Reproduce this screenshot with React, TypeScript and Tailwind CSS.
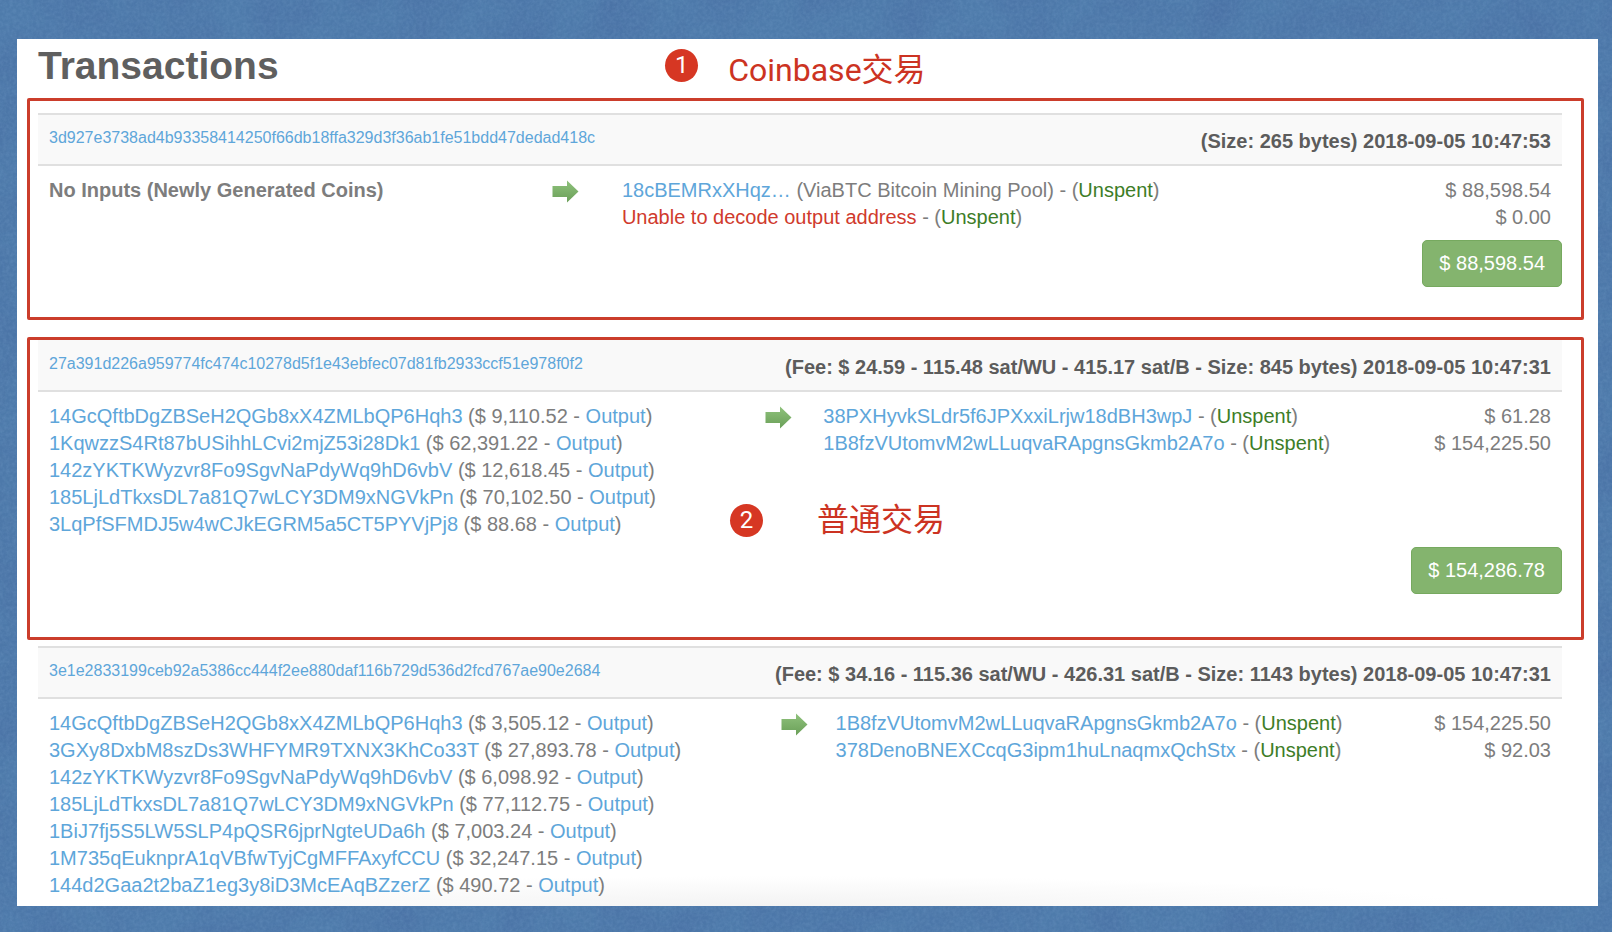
import React from "react";

type Input = { address: string; amount: string };
type Output = { address: string; amount: string; note?: string; broken?: boolean };
type Tx = {
  hash: string;
  meta: string;
  inputs: Input[];
  outputs: Output[];
  total?: string;
};

const coinbaseTx: Tx = {
  hash: "3d927e3738ad4b93358414250f66db18ffa329d3f36ab1fe51bdd47dedad418c",
  meta: "(Size: 265 bytes) 2018-09-05 10:47:53",
  inputs: [],
  outputs: [
    { address: "18cBEMRxXHqz…", note: "(ViaBTC Bitcoin Mining Pool)", amount: "$ 88,598.54" },
    { address: "Unable to decode output address", broken: true, amount: "$ 0.00" },
  ],
  total: "$ 88,598.54",
};

const regularTx: Tx = {
  hash: "27a391d226a959774fc474c10278d5f1e43ebfec07d81fb2933ccf51e978f0f2",
  meta: "(Fee: $ 24.59 - 115.48 sat/WU - 415.17 sat/B - Size: 845 bytes) 2018-09-05 10:47:31",
  inputs: [
    { address: "14GcQftbDgZBSeH2QGb8xX4ZMLbQP6Hqh3", amount: "$ 9,110.52" },
    { address: "1KqwzzS4Rt87bUSihhLCvi2mjZ53i28Dk1", amount: "$ 62,391.22" },
    { address: "142zYKTKWyzvr8Fo9SgvNaPdyWq9hD6vbV", amount: "$ 12,618.45" },
    { address: "185LjLdTkxsDL7a81Q7wLCY3DM9xNGVkPn", amount: "$ 70,102.50" },
    { address: "3LqPfSFMDJ5w4wCJkEGRM5a5CT5PYVjPj8", amount: "$ 88.68" },
  ],
  outputs: [
    { address: "38PXHyvkSLdr5f6JPXxxiLrjw18dBH3wpJ", amount: "$ 61.28" },
    { address: "1B8fzVUtomvM2wLLuqvaRApgnsGkmb2A7o", amount: "$ 154,225.50" },
  ],
  total: "$ 154,286.78",
};

const lastTx: Tx = {
  hash: "3e1e2833199ceb92a5386cc444f2ee880daf116b729d536d2fcd767ae90e2684",
  meta: "(Fee: $ 34.16 - 115.36 sat/WU - 426.31 sat/B - Size: 1143 bytes) 2018-09-05 10:47:31",
  inputs: [
    { address: "14GcQftbDgZBSeH2QGb8xX4ZMLbQP6Hqh3", amount: "$ 3,505.12" },
    { address: "3GXy8DxbM8szDs3WHFYMR9TXNX3KhCo33T", amount: "$ 27,893.78" },
    { address: "142zYKTKWyzvr8Fo9SgvNaPdyWq9hD6vbV", amount: "$ 6,098.92" },
    { address: "185LjLdTkxsDL7a81Q7wLCY3DM9xNGVkPn", amount: "$ 77,112.75" },
    { address: "1BiJ7fj5S5LW5SLP4pQSR6jprNgteUDa6h", amount: "$ 7,003.24" },
    { address: "1M735qEuknprA1qVBfwTyjCgMFFAxyfCCU", amount: "$ 32,247.15" },
    { address: "144d2Gaa2t2baZ1eg3y8iD3McEAqBZzerZ", amount: "$ 490.72" },
  ],
  outputs: [
    { address: "1B8fzVUtomvM2wLLuqvaRApgnsGkmb2A7o", amount: "$ 154,225.50" },
    { address: "378DenoBNEXCcqG3ipm1huLnaqmxQchStx", amount: "$ 92.03" },
  ],
};

function Link({ children }: { children: React.ReactNode }) {
  return (
    <a href="#" className="text-[#5ea6da] hover:underline">
      {children}
    </a>
  );
}

function Arrow() {
  return (
    <svg width="27" height="23" viewBox="0 0 27 23" aria-hidden="true" className="mt-[3px] block">
      <defs>
        <linearGradient id="arrowFill" x1="0" y1="0" x2="0" y2="1">
          <stop offset="0" stopColor="#8fc27c" />
          <stop offset="1" stopColor="#6a9f58" />
        </linearGradient>
      </defs>
      <path d="M0.5 6H15V0.5L26.5 11.5L15 22.5V17H0.5Z" fill="url(#arrowFill)" />
    </svg>
  );
}

type TransactionProps = { tx: Tx; inputsCol: string; arrowCol: string; flushTop?: boolean };

function Transaction({ tx, inputsCol, arrowCol, flushTop }: TransactionProps) {
  return (
    <div>
      <table className="w-full table-fixed border-collapse text-left">
        <colgroup>
          <col className={inputsCol} />
          <col className={arrowCol} />
          <col />
          <col className="w-[170px]" />
        </colgroup>
        <thead>
          <tr>
            <th colSpan={4} className="p-0 font-normal">
              <div
                className={
                  (flushTop ? "border-b-2 pt-[14px]" : "border-y-2 pt-[13px]") +
                  " flex items-start justify-between border-[#e0e0e0] bg-[#f9f9f9] px-[11px] pb-[9px]"
                }
              >
                <span className="text-base leading-5">
                  <Link>{tx.hash}</Link>
                </span>
                <span className="font-bold text-[#5c5c5c]">{tx.meta}</span>
              </div>
            </th>
          </tr>
        </thead>
        <tbody>
          <tr className="align-top whitespace-nowrap">
            <td className="px-[11px] pt-[11px]">
              {tx.inputs.length === 0 ? (
                <b>No Inputs (Newly Generated Coins)</b>
              ) : (
                tx.inputs.map((input) => (
                  <div key={input.address}>
                    <Link>{input.address}</Link> ({input.amount} - <Link>Output</Link>)
                  </div>
                ))
              )}
            </td>
            <td className="pt-[11px] pl-[11px]">
              <Arrow />
            </td>
            <td className="px-[11px] pt-[11px]">
              {tx.outputs.map((output) => (
                <div key={output.address}>
                  {output.broken ? (
                    <span className="text-[#d03a2d]">{output.address}</span>
                  ) : (
                    <Link>{output.address}</Link>
                  )}
                  {output.note ? <span> {output.note}</span> : null} - (
                  <span className="text-[#3d7d27]">Unspent</span>)
                </div>
              ))}
            </td>
            <td className="px-[11px] pt-[11px] text-right">
              {tx.outputs.map((output) => (
                <div key={output.address}>{output.amount}</div>
              ))}
            </td>
          </tr>
        </tbody>
      </table>
      {tx.total ? (
        <div className="mt-[9px] flex justify-end">
          <button
            type="button"
            className="rounded-[5px] border border-[#76a95f] bg-[#84b46e] px-4 py-[9px] text-white"
          >
            {tx.total}
          </button>
        </div>
      ) : null}
    </div>
  );
}

function Badge({ children }: { children: React.ReactNode }) {
  return (
    <span className="flex size-[33px] items-center justify-center rounded-full bg-[#d63723] font-[Roboto,sans-serif] text-[24px] text-white">
      {children}
    </span>
  );
}

function Label({ children }: { children: React.ReactNode }) {
  return (
    <span className="font-[Roboto,'Noto_Sans_CJK_SC',sans-serif] text-[32px] leading-[42px] text-[#cc3322]">
      {children}
    </span>
  );
}

function PaperTexture() {
  return (
    <svg aria-hidden="true" className="pointer-events-none absolute inset-0 h-full w-full">
      <filter id="mottle" x="0" y="0" width="100%" height="100%" colorInterpolationFilters="sRGB">
        <feTurbulence type="fractalNoise" baseFrequency="0.02" numOctaves="3" seed="9" />
        <feColorMatrix values="0 0 0 0 0.27  0 0 0 0 0.4  0 0 0 0 0.62  0.7 0 0 0 -0.2" />
      </filter>
      <filter id="grain" x="0" y="0" width="100%" height="100%" colorInterpolationFilters="sRGB">
        <feTurbulence type="fractalNoise" baseFrequency="0.3" numOctaves="3" seed="4" />
        <feColorMatrix values="0 0 0 0 0.6  0 0 0 0 0.75  0 0 0 0 0.9  0.25 0 0 0 -0.08" />
      </filter>
      <rect width="100%" height="100%" filter="url(#mottle)" />
      <rect width="100%" height="100%" filter="url(#grain)" />
    </svg>
  );
}

export default function App() {
  return (
    <div className="relative min-h-screen bg-[#4e7bab] pt-[39px] pr-[14px] pb-[26px] pl-[17px] font-['Liberation_Sans',Arial,sans-serif] text-[20px] leading-[27px] text-[#7d7d7d]">
      <PaperTexture />
      <main className="relative bg-white bg-[radial-gradient(ellipse_700px_30px_at_48%_100%,#f3f3f3,#ffffff)] pb-[7px]">
        <div className="flex h-[59px] items-start">
          <h1 className="w-[41%] pt-1 pl-[21px] text-[39px] leading-[46px] font-bold text-[#5f5f5f]">Transactions</h1>
          <div className="flex gap-[30px] pt-[10px]">
            <Badge>1</Badge>
            <Label>Coinbase交易</Label>
          </div>
        </div>

        <section className="mr-[14px] ml-[10px] rounded-[2px] border-[3px] border-[#cb3d2b] pt-3 pr-[19px] pb-[30px] pl-2">
          <Transaction tx={coinbaseTx} inputsCol="w-[33%]" arrowCol="w-[70px]" />
        </section>

        <section className="relative mt-[17px] mr-[14px] ml-[10px] rounded-[2px] border-[3px] border-[#cb3d2b] pr-[19px] pb-[43px] pl-2">
          <Transaction tx={regularTx} inputsCol="w-[47%]" arrowCol="w-[58px]" flushTop />
          <div className="absolute top-[159px] left-[700px] flex items-center gap-[54px]">
            <Badge>2</Badge>
            <Label>普通交易</Label>
          </div>
        </section>

        <section className="mt-[6px] mr-9 ml-[21px]">
          <Transaction tx={lastTx} inputsCol="w-[48%]" arrowCol="w-[55px]" />
        </section>
      </main>
    </div>
  );
}
